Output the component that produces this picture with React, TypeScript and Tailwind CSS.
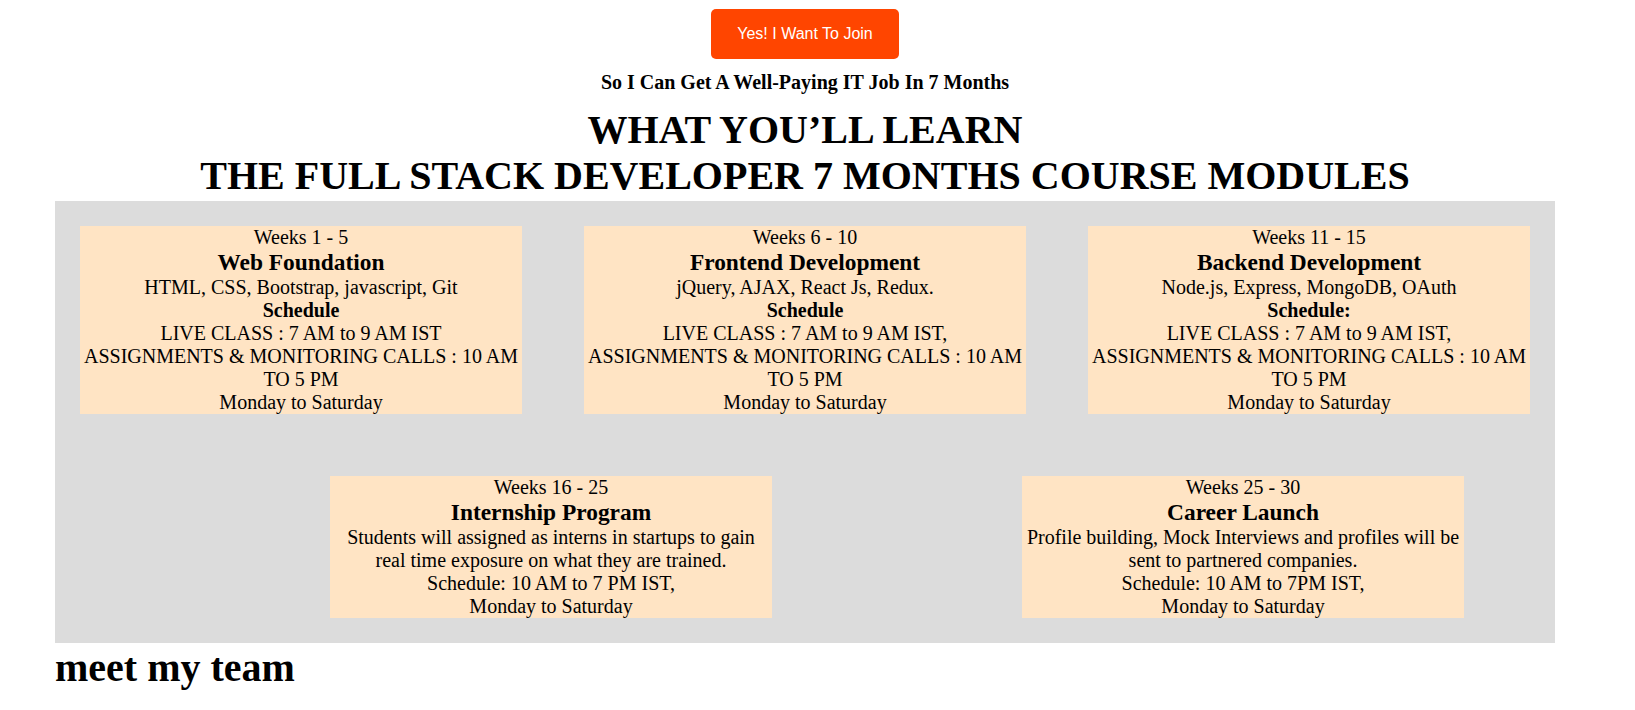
const rowOne = [
  {
    weeks: "Weeks 1 - 5",
    title: "Web Foundation",
    topics: "HTML, CSS, Bootstrap, javascript, Git",
    label: "Schedule",
    live: "LIVE CLASS : 7 AM to 9 AM IST",
  },
  {
    weeks: "Weeks 6 - 10",
    title: "Frontend Development",
    topics: "jQuery, AJAX, React Js, Redux.",
    label: "Schedule",
    live: "LIVE CLASS : 7 AM to 9 AM IST,",
  },
  {
    weeks: "Weeks 11 - 15",
    title: "Backend Development",
    topics: "Node.js, Express, MongoDB, OAuth",
    label: "Schedule:",
    live: "LIVE CLASS : 7 AM to 9 AM IST,",
  },
];

const rowTwo = [
  {
    weeks: "Weeks 16 - 25",
    title: "Internship Program",
    desc: "Students will assigned as interns in startups to gain real time exposure on what they are trained.",
    schedule: "Schedule: 10 AM to 7 PM IST,",
  },
  {
    weeks: "Weeks 25 - 30",
    title: "Career Launch",
    desc: "Profile building, Mock Interviews and profiles will be sent to partnered companies.",
    schedule: "Schedule: 10 AM to 7PM IST,",
  },
];

function ModuleCard({ children }: { children: React.ReactNode }) {
  return (
    <div className="w-[442px] bg-[#ffe4c4] text-center text-[20px] leading-[23px] text-black">
      {children}
    </div>
  );
}

export default function App() {
  return (
    <div className="w-[1610px] bg-white font-['Liberation_Serif',serif] text-black">
      {/* CTA */}
      <div className="flex flex-col items-center pt-[9px]">
        <button className="h-[50px] w-[188px] rounded-[5px] bg-[#ff4500] font-['Liberation_Sans',Arial,sans-serif] text-[16px] text-white">
          Yes! I Want To Join
        </button>
        <p className="mt-[12px] text-[20px] font-bold leading-[23px]">
          So I Can Get A Well-Paying IT Job In 7 Months
        </p>
      </div>

      {/* Heading */}
      <h1 className="mt-[13px] text-center text-[40px] font-bold leading-[46px]">
        WHAT YOU’LL LEARN
        <br />
        THE FULL STACK DEVELOPER 7 MONTHS COURSE MODULES
      </h1>

      {/* Modules */}
      <section className="mx-[55px] mt-[2px] bg-[#dcdcdc] p-[25px]">
        <div className="flex justify-between">
          {rowOne.map((m) => (
            <ModuleCard key={m.title}>
              {m.weeks}
              <h3 className="text-[23.4px] font-bold leading-[27px]">{m.title}</h3>
              {m.topics}
              <br />
              <b>{m.label}</b>
              <br />
              {m.live}
              <br />
              ASSIGNMENTS &amp; MONITORING CALLS : 10 AM TO 5 PM
              <br />
              Monday to Saturday
            </ModuleCard>
          ))}
        </div>

        <div className="mt-[62px] flex gap-[250px] pl-[250px]">
          {rowTwo.map((m) => (
            <ModuleCard key={m.title}>
              {m.weeks}
              <h3 className="text-[23.4px] font-bold leading-[27px]">{m.title}</h3>
              {m.desc}
              <br />
              {m.schedule}
              <br />
              Monday to Saturday
            </ModuleCard>
          ))}
        </div>
      </section>

      <h2 className="ml-[55px] mt-[2px] text-[40px] font-bold leading-[46px]">meet my team</h2>
    </div>
  );
}
